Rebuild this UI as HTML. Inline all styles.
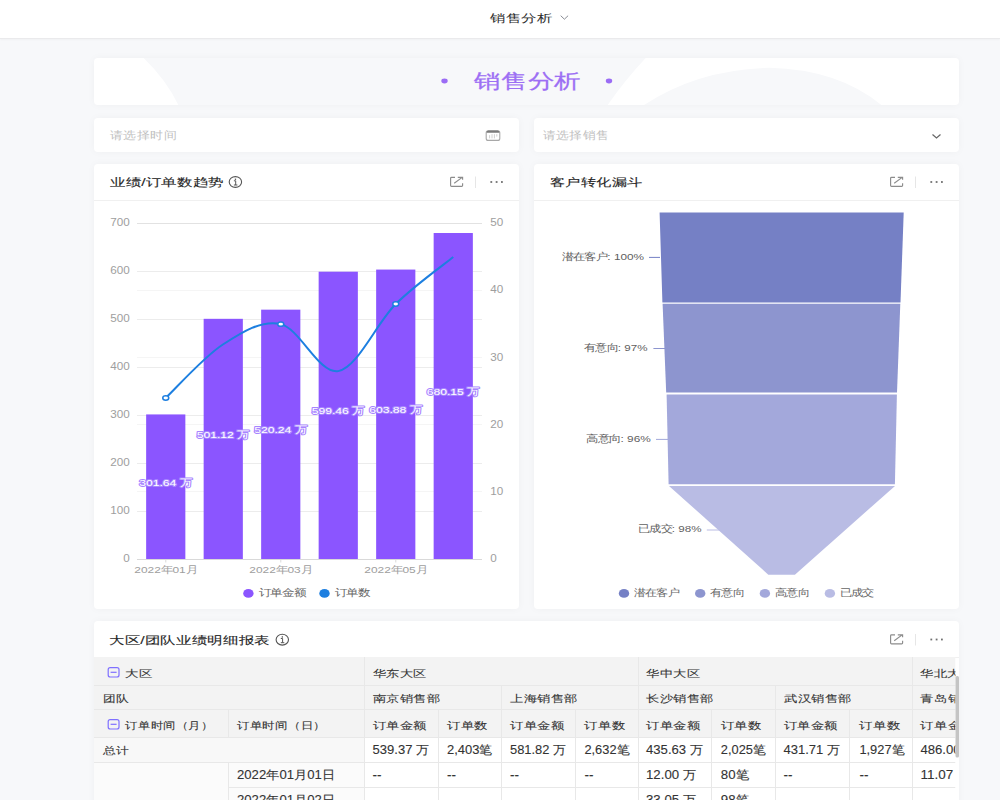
<!DOCTYPE html>
<html><head><meta charset="utf-8">
<style>
*{box-sizing:border-box;margin:0;padding:0}
html,body{width:1000px;height:800px;overflow:hidden}
body{background:#f7f8fa;font-family:"Liberation Sans",sans-serif;position:relative;color:#333}
.abs{position:absolute}
#hdr{left:0;top:0;width:1000px;height:39px;background:#fff;border-bottom:1px solid #eaeaec;box-shadow:0 1px 2px rgba(0,0,0,0.03)}
.card{position:absolute;background:#fff;border-radius:4px;box-shadow:0 0 9px rgba(0,0,0,0.035)}
.ch{position:absolute;left:0;top:0;right:0;height:37px;border-bottom:1px solid #f0f0f0}
svg text{font-family:"Liberation Sans",sans-serif}
</style></head><body>
<div id="hdr" class="abs"></div>
<div class="card" style="left:94px;top:57.5px;width:865px;height:47.6px;overflow:hidden">
<svg class="abs" style="left:0;top:0" width="865" height="48" viewBox="0 0 865 48">
<path d="M49.6 0 Q72.5 22 84.8 48 L513 48 Q531 22 551.7 0 Z" fill="#f7f8fa"/>
<path d="M548.6 48 Q603 11.5 675.5 9.8 Q745 11.5 788.6 48 Z" fill="#f7f8fa"/>
</svg></div>
<div class="card" style="left:94px;top:118px;width:425px;height:34px"></div>
<div class="card" style="left:534px;top:118px;width:425px;height:34px"></div>
<div class="card" style="left:94px;top:164px;width:425px;height:445px"><div class="ch"></div></div>
<div class="card" style="left:534px;top:164px;width:425px;height:445px"><div class="ch"></div></div>
<div class="card" style="left:94px;top:621px;width:865px;height:200px"><div class="ch"></div></div>

<svg class="abs" style="left:0;top:0" width="1000" height="800" viewBox="0 0 1000 800">
<text transform="translate(490.00,21.80) scale(1,0.87)" x="0" y="0" font-size="13" fill="#2b2b2b" font-weight="normal" text-anchor="start" textLength="62.5" lengthAdjust="spacingAndGlyphs" >销售分析</text>
<path d="M560.7 15.7 L564.4 19.2 L568.1 15.7" fill="none" stroke="#7a7f88" stroke-width="0.9"/>
<ellipse cx="444.5" cy="81" rx="3.2" ry="2.4" fill="#9b6cf5"/>
<ellipse cx="609" cy="81" rx="3.2" ry="2.4" fill="#9b6cf5"/>
<text transform="translate(474.00,87.60) scale(1,0.93)" x="0" y="0" font-size="22" fill="#9d6ff4" font-weight="normal" text-anchor="start" textLength="107.0" lengthAdjust="spacingAndGlyphs" stroke="#9d6ff4" stroke-width="0.25">销售分析</text>
<text transform="translate(109.50,138.60) scale(1,0.93)" x="0" y="0" font-size="12" fill="#bfbfbf" font-weight="normal" text-anchor="start" textLength="67.5" lengthAdjust="spacingAndGlyphs" >请选择时间</text>
<text transform="translate(542.50,138.60) scale(1,0.93)" x="0" y="0" font-size="12" fill="#bfbfbf" font-weight="normal" text-anchor="start" textLength="67.0" lengthAdjust="spacingAndGlyphs" >请选择销售</text>
<rect x="486.2" y="130.8" width="13.6" height="9.6" rx="2" fill="none" stroke="#a8a8a8" stroke-width="1.1"/>
<path d="M486.6 132.2 Q486.6 130.6 488.4 130.6 H497.6 Q499.4 130.6 499.4 132.2 V132.8 H486.6 Z" fill="#7a7a7a"/>
<path d="M489.6 135.2v3.2M492 134.2v4.2M494.4 134.2v4.2M496.8 134.2v2.4" stroke="#c4c4c4" stroke-width="0.8"/>
<path d="M932.5 134.5 L936.5 138 L940.5 134.5" fill="none" stroke="#666" stroke-width="1.2"/>
<text transform="translate(110.00,185.60) scale(1,0.87)" x="0" y="0" font-size="13" fill="#262626" font-weight="normal" text-anchor="start" textLength="114.0" lengthAdjust="spacingAndGlyphs" stroke="#262626" stroke-width="0.12">业绩/订单数趋势</text>
<ellipse cx="235.4" cy="182" rx="6.2" ry="5.4" fill="none" stroke="#555" stroke-width="1.1"/>
<rect x="234.8" y="178.6" width="1.3" height="1.3" fill="#555"/>
<path d="M233.9 180.8 H235.70000000000002 V185 M233.9 185 H237.4" fill="none" stroke="#555" stroke-width="1"/>
<path d="M455 177.3 H451.5 Q450.6 177.3 450.6 178.20000000000002 V185.4 Q450.6 186.3 451.5 186.3 H461.70000000000005 Q462.6 186.3 462.6 185.4 V183.2" fill="none" stroke="#8c8c8c" stroke-width="1.15"/>
<path d="M454.2 183.3 L462.20000000000005 177.4 M457.8 177.3 H462.6 V179.8" fill="none" stroke="#8c8c8c" stroke-width="1.15"/>
<path d="M475.5 176.5 V188" stroke="#e6e6e6" stroke-width="1"/>
<rect x="490.4" y="181.1" width="1.8" height="1.8" fill="#707070"/>
<rect x="495.7" y="181.1" width="1.8" height="1.8" fill="#707070"/>
<rect x="501.0" y="181.1" width="1.8" height="1.8" fill="#707070"/>
<text transform="translate(550.00,185.80) scale(1,0.87)" x="0" y="0" font-size="13" fill="#262626" font-weight="normal" text-anchor="start" textLength="92.5" lengthAdjust="spacingAndGlyphs" stroke="#262626" stroke-width="0.12">客户转化漏斗</text>
<path d="M895 177.3 H891.5 Q890.6 177.3 890.6 178.20000000000002 V185.4 Q890.6 186.3 891.5 186.3 H901.7 Q902.6 186.3 902.6 185.4 V183.2" fill="none" stroke="#8c8c8c" stroke-width="1.15"/>
<path d="M894.2 183.3 L902.2 177.4 M897.8 177.3 H902.6 V179.8" fill="none" stroke="#8c8c8c" stroke-width="1.15"/>
<path d="M915.5 176.5 V188" stroke="#e6e6e6" stroke-width="1"/>
<rect x="930.4" y="181.1" width="1.8" height="1.8" fill="#707070"/>
<rect x="935.7" y="181.1" width="1.8" height="1.8" fill="#707070"/>
<rect x="941.0" y="181.1" width="1.8" height="1.8" fill="#707070"/>
<text transform="translate(109.00,643.80) scale(1,0.87)" x="0" y="0" font-size="13" fill="#262626" font-weight="normal" text-anchor="start" textLength="161.0" lengthAdjust="spacingAndGlyphs" stroke="#262626" stroke-width="0.12">大区/团队业绩明细报表</text>
<ellipse cx="282.3" cy="639.7" rx="6.2" ry="5.4" fill="none" stroke="#555" stroke-width="1.1"/>
<rect x="281.7" y="636.3000000000001" width="1.3" height="1.3" fill="#555"/>
<path d="M280.8 638.5 H282.6 V642.7 M280.8 642.7 H284.3" fill="none" stroke="#555" stroke-width="1"/>
<path d="M895 634.8 H891.5 Q890.6 634.8 890.6 635.6999999999999 V642.9 Q890.6 643.8 891.5 643.8 H901.7 Q902.6 643.8 902.6 642.9 V640.7" fill="none" stroke="#8c8c8c" stroke-width="1.15"/>
<path d="M894.2 640.8 L902.2 634.9 M897.8 634.8 H902.6 V637.3" fill="none" stroke="#8c8c8c" stroke-width="1.15"/>
<path d="M915.5 634.0 V645.5" stroke="#e6e6e6" stroke-width="1"/>
<rect x="930.4" y="638.6" width="1.8" height="1.8" fill="#707070"/>
<rect x="935.7" y="638.6" width="1.8" height="1.8" fill="#707070"/>
<rect x="941.0" y="638.6" width="1.8" height="1.8" fill="#707070"/>
<path d="M137 511.5 H482" stroke="#000" stroke-opacity="0.075" stroke-width="1"/>
<path d="M137 463.5 H482" stroke="#000" stroke-opacity="0.075" stroke-width="1"/>
<path d="M137 415.5 H482" stroke="#000" stroke-opacity="0.075" stroke-width="1"/>
<path d="M137 367.5 H482" stroke="#000" stroke-opacity="0.075" stroke-width="1"/>
<path d="M137 319.5 H482" stroke="#000" stroke-opacity="0.075" stroke-width="1"/>
<path d="M137 271.5 H482" stroke="#000" stroke-opacity="0.075" stroke-width="1"/>
<path d="M137 223.5 H482" stroke="#000" stroke-opacity="0.075" stroke-width="1"/>
<path d="M137 491.5 H482" stroke="#000" stroke-opacity="0.04" stroke-width="1"/>
<path d="M137 424.5 H482" stroke="#000" stroke-opacity="0.04" stroke-width="1"/>
<path d="M137 357.5 H482" stroke="#000" stroke-opacity="0.04" stroke-width="1"/>
<path d="M137 290.5 H482" stroke="#000" stroke-opacity="0.04" stroke-width="1"/>
<path d="M137 223.5 H482" stroke="#000" stroke-opacity="0.04" stroke-width="1"/>
<text x="129.70" y="561.80" font-size="11" fill="#9e9e9e" font-weight="normal" text-anchor="end" textLength="6.5" lengthAdjust="spacingAndGlyphs" >0</text>
<text x="129.70" y="513.87" font-size="11" fill="#9e9e9e" font-weight="normal" text-anchor="end" textLength="19.5" lengthAdjust="spacingAndGlyphs" >100</text>
<text x="129.70" y="465.94" font-size="11" fill="#9e9e9e" font-weight="normal" text-anchor="end" textLength="19.5" lengthAdjust="spacingAndGlyphs" >200</text>
<text x="129.70" y="418.01" font-size="11" fill="#9e9e9e" font-weight="normal" text-anchor="end" textLength="19.5" lengthAdjust="spacingAndGlyphs" >300</text>
<text x="129.70" y="370.09" font-size="11" fill="#9e9e9e" font-weight="normal" text-anchor="end" textLength="19.5" lengthAdjust="spacingAndGlyphs" >400</text>
<text x="129.70" y="322.16" font-size="11" fill="#9e9e9e" font-weight="normal" text-anchor="end" textLength="19.5" lengthAdjust="spacingAndGlyphs" >500</text>
<text x="129.70" y="274.23" font-size="11" fill="#9e9e9e" font-weight="normal" text-anchor="end" textLength="19.5" lengthAdjust="spacingAndGlyphs" >600</text>
<text x="129.70" y="226.30" font-size="11" fill="#9e9e9e" font-weight="normal" text-anchor="end" textLength="19.5" lengthAdjust="spacingAndGlyphs" >700</text>
<text x="490.30" y="561.80" font-size="11" fill="#9e9e9e" font-weight="normal" text-anchor="start" textLength="6.5" lengthAdjust="spacingAndGlyphs" >0</text>
<text x="490.30" y="494.70" font-size="11" fill="#9e9e9e" font-weight="normal" text-anchor="start" textLength="13.0" lengthAdjust="spacingAndGlyphs" >10</text>
<text x="490.30" y="427.60" font-size="11" fill="#9e9e9e" font-weight="normal" text-anchor="start" textLength="13.0" lengthAdjust="spacingAndGlyphs" >20</text>
<text x="490.30" y="360.50" font-size="11" fill="#9e9e9e" font-weight="normal" text-anchor="start" textLength="13.0" lengthAdjust="spacingAndGlyphs" >30</text>
<text x="490.30" y="293.40" font-size="11" fill="#9e9e9e" font-weight="normal" text-anchor="start" textLength="13.0" lengthAdjust="spacingAndGlyphs" >40</text>
<text x="490.30" y="226.30" font-size="11" fill="#9e9e9e" font-weight="normal" text-anchor="start" textLength="13.0" lengthAdjust="spacingAndGlyphs" >50</text>
<rect x="146.15" y="414.43" width="39.2" height="144.57" fill="#8b55ff"/>
<rect x="203.65" y="318.82" width="39.2" height="240.18" fill="#8b55ff"/>
<rect x="261.15" y="309.66" width="39.2" height="249.34" fill="#8b55ff"/>
<rect x="318.65" y="271.69" width="39.2" height="287.31" fill="#8b55ff"/>
<rect x="376.15" y="269.57" width="39.2" height="289.43" fill="#8b55ff"/>
<rect x="433.65" y="233.01" width="39.2" height="325.99" fill="#8b55ff"/>
<path d="M137 559.5 H482" stroke="#d9d9d9" stroke-width="1"/>
<path d="M165.8 560 V562.5" stroke="#d9d9d9" stroke-width="1"/>
<path d="M280.8 560 V562.5" stroke="#d9d9d9" stroke-width="1"/>
<path d="M395.8 560 V562.5" stroke="#d9d9d9" stroke-width="1"/>
<text transform="translate(165.75,572.70) scale(1,0.87)" x="0" y="0" font-size="11" fill="#9e9e9e" font-weight="normal" text-anchor="middle" textLength="63.0" lengthAdjust="spacingAndGlyphs" >2022年01月</text>
<text transform="translate(280.75,572.70) scale(1,0.87)" x="0" y="0" font-size="11" fill="#9e9e9e" font-weight="normal" text-anchor="middle" textLength="63.0" lengthAdjust="spacingAndGlyphs" >2022年03月</text>
<text transform="translate(395.75,572.70) scale(1,0.87)" x="0" y="0" font-size="11" fill="#9e9e9e" font-weight="normal" text-anchor="middle" textLength="63.0" lengthAdjust="spacingAndGlyphs" >2022年05月</text>
<path d="M165.75 397.96 C175.33 389.01 204.08 356.58 223.25 344.28 C242.42 331.98 261.58 319.68 280.75 324.15 C299.92 328.62 319.08 374.48 338.25 371.12 C357.42 367.76 376.58 323.03 395.75 304.02 C414.92 285.01 443.67 264.88 453.25 257.05" fill="none" stroke="#1d7fe0" stroke-width="2"/>
<ellipse cx="165.75" cy="397.96" rx="3" ry="2.2" fill="#fff" stroke="#1d7fe0" stroke-width="1.5"/>
<ellipse cx="280.75" cy="324.15" rx="3" ry="2.2" fill="#fff" stroke="#1d7fe0" stroke-width="1.5"/>
<ellipse cx="395.75" cy="304.02" rx="3" ry="2.2" fill="#fff" stroke="#1d7fe0" stroke-width="1.5"/>
<text transform="translate(165.75,485.51) scale(1,0.85)" x="0" y="0" font-size="11.5" fill="#fff" font-weight="normal" text-anchor="middle" textLength="53.0" lengthAdjust="spacingAndGlyphs" stroke="#a785ff" stroke-width="2.2" paint-order="stroke" stroke-linejoin="round">301.64 万</text>
<text transform="translate(223.25,437.71) scale(1,0.85)" x="0" y="0" font-size="11.5" fill="#fff" font-weight="normal" text-anchor="middle" textLength="53.0" lengthAdjust="spacingAndGlyphs" stroke="#a785ff" stroke-width="2.2" paint-order="stroke" stroke-linejoin="round">501.12 万</text>
<text transform="translate(280.75,433.13) scale(1,0.85)" x="0" y="0" font-size="11.5" fill="#fff" font-weight="normal" text-anchor="middle" textLength="53.0" lengthAdjust="spacingAndGlyphs" stroke="#a785ff" stroke-width="2.2" paint-order="stroke" stroke-linejoin="round">520.24 万</text>
<text transform="translate(338.25,414.14) scale(1,0.85)" x="0" y="0" font-size="11.5" fill="#fff" font-weight="normal" text-anchor="middle" textLength="53.0" lengthAdjust="spacingAndGlyphs" stroke="#a785ff" stroke-width="2.2" paint-order="stroke" stroke-linejoin="round">599.46 万</text>
<text transform="translate(395.75,413.08) scale(1,0.85)" x="0" y="0" font-size="11.5" fill="#fff" font-weight="normal" text-anchor="middle" textLength="53.0" lengthAdjust="spacingAndGlyphs" stroke="#a785ff" stroke-width="2.2" paint-order="stroke" stroke-linejoin="round">603.88 万</text>
<text transform="translate(453.25,394.81) scale(1,0.85)" x="0" y="0" font-size="11.5" fill="#fff" font-weight="normal" text-anchor="middle" textLength="53.0" lengthAdjust="spacingAndGlyphs" stroke="#a785ff" stroke-width="2.2" paint-order="stroke" stroke-linejoin="round">680.15 万</text>
<ellipse cx="248.4" cy="593.4" rx="5.2" ry="4.4" fill="#8b55ff"/>
<text transform="translate(258.50,595.60) scale(1,0.87)" x="0" y="0" font-size="11" fill="#666" font-weight="normal" text-anchor="start" textLength="47.0" lengthAdjust="spacingAndGlyphs" >订单金额</text>
<ellipse cx="324.5" cy="593.4" rx="5.2" ry="4.4" fill="#1d7fe0"/>
<text transform="translate(334.80,595.60) scale(1,0.87)" x="0" y="0" font-size="11" fill="#666" font-weight="normal" text-anchor="start" textLength="35.0" lengthAdjust="spacingAndGlyphs" >订单数</text>
<path d="M659.6 212.6 L903.7 212.6 L900.5 302.4 L662.4 302.4 Z" fill="#7580c5"/>
<path d="M662.6 303.8 L900.3 303.8 L897 392.6 L666.2 392.6 Z" fill="#8d95cf"/>
<path d="M666.6 394.6 L896.9 394.6 L894.9 484.2 L668.6 484.2 Z" fill="#a3a8db"/>
<path d="M669 485.9 L895 485.9 L794.9 574.7 L768.3 574.7 Z" fill="#b9bce4"/>
<path d="M649 257.4 H660" stroke="#7580c5" stroke-width="1"/>
<text transform="translate(561.60,260.00) scale(1,0.87)" x="0" y="0" font-size="11" fill="#606060" font-weight="normal" text-anchor="start" textLength="82.4" lengthAdjust="spacingAndGlyphs" >潜在客户: 100%</text>
<path d="M653.4 348.5 H665" stroke="#8d95cf" stroke-width="1"/>
<text transform="translate(584.10,350.80) scale(1,0.87)" x="0" y="0" font-size="11" fill="#606060" font-weight="normal" text-anchor="start" textLength="63.4" lengthAdjust="spacingAndGlyphs" >有意向: 97%</text>
<path d="M656 439.4 H668" stroke="#a3a8db" stroke-width="1"/>
<text transform="translate(586.00,441.60) scale(1,0.87)" x="0" y="0" font-size="11" fill="#606060" font-weight="normal" text-anchor="start" textLength="64.8" lengthAdjust="spacingAndGlyphs" >高意向: 96%</text>
<path d="M706.8 530 H720" stroke="#b9bce4" stroke-width="1"/>
<text transform="translate(638.00,532.40) scale(1,0.87)" x="0" y="0" font-size="11" fill="#606060" font-weight="normal" text-anchor="start" textLength="63.5" lengthAdjust="spacingAndGlyphs" >已成交: 98%</text>
<ellipse cx="624" cy="593.4" rx="5.2" ry="4.4" fill="#7580c5"/>
<text transform="translate(633.80,595.60) scale(1,0.87)" x="0" y="0" font-size="11" fill="#666" font-weight="normal" text-anchor="start" textLength="45.0" lengthAdjust="spacingAndGlyphs" >潜在客户</text>
<ellipse cx="700.2" cy="593.4" rx="5.2" ry="4.4" fill="#8d95cf"/>
<text transform="translate(710.00,595.60) scale(1,0.87)" x="0" y="0" font-size="11" fill="#666" font-weight="normal" text-anchor="start" textLength="34.0" lengthAdjust="spacingAndGlyphs" >有意向</text>
<ellipse cx="764.9" cy="593.4" rx="5.2" ry="4.4" fill="#a3a8db"/>
<text transform="translate(775.00,595.60) scale(1,0.87)" x="0" y="0" font-size="11" fill="#666" font-weight="normal" text-anchor="start" textLength="34.0" lengthAdjust="spacingAndGlyphs" >高意向</text>
<ellipse cx="829.9" cy="593.4" rx="5.2" ry="4.4" fill="#b9bce4"/>
<text transform="translate(839.70,595.60) scale(1,0.87)" x="0" y="0" font-size="11" fill="#666" font-weight="normal" text-anchor="start" textLength="34.0" lengthAdjust="spacingAndGlyphs" >已成交</text>
<svg x="0" y="0" width="955.5" height="800" overflow="hidden">
<rect x="94" y="657" width="861.50" height="80.50" fill="#f3f3f3"/>
<rect x="94" y="737.5" width="270.50" height="25.00" fill="#f8f8f8"/>
<rect x="94" y="762.5" width="270.50" height="37.50" fill="#fbfbfb"/>
<path d="M94 685.5 H955.5" stroke="#e8e8e8" stroke-width="1"/>
<path d="M94 709.5 H955.5" stroke="#e8e8e8" stroke-width="1"/>
<path d="M94 737.5 H955.5" stroke="#e8e8e8" stroke-width="1"/>
<path d="M94 762.5 H955.5" stroke="#e8e8e8" stroke-width="1"/>
<path d="M228.5 787.5 H955.5" stroke="#e8e8e8" stroke-width="1"/>
<path d="M228.5 709.5 V737.5" stroke="#e8e8e8" stroke-width="1"/>
<path d="M228.5 762.5 V800" stroke="#e8e8e8" stroke-width="1"/>
<path d="M364.5 657 V800" stroke="#e8e8e8" stroke-width="1"/>
<path d="M438.5 709.5 V800" stroke="#e8e8e8" stroke-width="1"/>
<path d="M501.5 685.5 V800" stroke="#e8e8e8" stroke-width="1"/>
<path d="M575.5 709.5 V800" stroke="#e8e8e8" stroke-width="1"/>
<path d="M638.5 657 V800" stroke="#e8e8e8" stroke-width="1"/>
<path d="M711.5 709.5 V800" stroke="#e8e8e8" stroke-width="1"/>
<path d="M775.5 685.5 V800" stroke="#e8e8e8" stroke-width="1"/>
<path d="M849.5 709.5 V800" stroke="#e8e8e8" stroke-width="1"/>
<path d="M912.5 657 V800" stroke="#e8e8e8" stroke-width="1"/>
<path d="M986.5 709.5 V800" stroke="#e8e8e8" stroke-width="1"/>
</svg>
<rect x="108.19999999999999" y="667.6" width="10.8" height="9.4" rx="2" fill="none" stroke="#7f70ff" stroke-width="1.2"/>
<path d="M110.6 672.3 H116.6" stroke="#7f70ff" stroke-width="1.2"/>
<rect x="108.19999999999999" y="719.6" width="10.8" height="9.4" rx="2" fill="none" stroke="#7f70ff" stroke-width="1.2"/>
<path d="M110.6 724.3 H116.6" stroke="#7f70ff" stroke-width="1.2"/>
<svg x="0" y="0" width="955.5" height="800" overflow="hidden">
<text transform="translate(124.80,676.80) scale(1,0.87)" x="0" y="0" font-size="12" fill="#333" font-weight="normal" text-anchor="start" textLength="27.5" lengthAdjust="spacingAndGlyphs" stroke="#333" stroke-width="0.1">大区</text>
<text transform="translate(102.60,702.00) scale(1,0.87)" x="0" y="0" font-size="12" fill="#333" font-weight="normal" text-anchor="start" textLength="26.0" lengthAdjust="spacingAndGlyphs" stroke="#333" stroke-width="0.1">团队</text>
<text transform="translate(125.40,728.50) scale(1,0.87)" x="0" y="0" font-size="12" fill="#333" font-weight="normal" text-anchor="start" textLength="88.0" lengthAdjust="spacingAndGlyphs" stroke="#333" stroke-width="0.1">订单时间（月）</text>
<text transform="translate(237.00,728.50) scale(1,0.87)" x="0" y="0" font-size="12" fill="#333" font-weight="normal" text-anchor="start" textLength="89.0" lengthAdjust="spacingAndGlyphs" stroke="#333" stroke-width="0.1">订单时间（日）</text>
<text transform="translate(102.60,754.00) scale(1,0.87)" x="0" y="0" font-size="12" fill="#333" font-weight="normal" text-anchor="start" textLength="26.0" lengthAdjust="spacingAndGlyphs" stroke="#333" stroke-width="0.1">总计</text>
<text transform="translate(237.00,778.90) scale(1,0.999)" x="0" y="0" font-size="12" fill="#333" font-weight="normal" text-anchor="start" textLength="98.0" lengthAdjust="spacingAndGlyphs" stroke="#333" stroke-width="0.1">2022年01月01日</text>
<text transform="translate(237.00,804.10) scale(1,0.999)" x="0" y="0" font-size="12" fill="#333" font-weight="normal" text-anchor="start" textLength="98.0" lengthAdjust="spacingAndGlyphs" stroke="#333" stroke-width="0.1">2022年01月02日</text>
<text transform="translate(372.60,676.80) scale(1,0.87)" x="0" y="0" font-size="12" fill="#333" font-weight="normal" text-anchor="start" textLength="54.0" lengthAdjust="spacingAndGlyphs" stroke="#333" stroke-width="0.1">华东大区</text>
<text transform="translate(646.00,676.80) scale(1,0.87)" x="0" y="0" font-size="12" fill="#333" font-weight="normal" text-anchor="start" textLength="54.0" lengthAdjust="spacingAndGlyphs" stroke="#333" stroke-width="0.1">华中大区</text>
<text transform="translate(920.40,676.80) scale(1,0.87)" x="0" y="0" font-size="12" fill="#333" font-weight="normal" text-anchor="start" textLength="54.0" lengthAdjust="spacingAndGlyphs" stroke="#333" stroke-width="0.1">华北大区</text>
<text transform="translate(372.60,702.00) scale(1,0.87)" x="0" y="0" font-size="12" fill="#333" font-weight="normal" text-anchor="start" textLength="68.0" lengthAdjust="spacingAndGlyphs" stroke="#333" stroke-width="0.1">南京销售部</text>
<text transform="translate(510.00,702.00) scale(1,0.87)" x="0" y="0" font-size="12" fill="#333" font-weight="normal" text-anchor="start" textLength="68.0" lengthAdjust="spacingAndGlyphs" stroke="#333" stroke-width="0.1">上海销售部</text>
<text transform="translate(646.00,702.00) scale(1,0.87)" x="0" y="0" font-size="12" fill="#333" font-weight="normal" text-anchor="start" textLength="68.0" lengthAdjust="spacingAndGlyphs" stroke="#333" stroke-width="0.1">长沙销售部</text>
<text transform="translate(784.00,702.00) scale(1,0.87)" x="0" y="0" font-size="12" fill="#333" font-weight="normal" text-anchor="start" textLength="68.0" lengthAdjust="spacingAndGlyphs" stroke="#333" stroke-width="0.1">武汉销售部</text>
<text transform="translate(920.40,702.00) scale(1,0.87)" x="0" y="0" font-size="12" fill="#333" font-weight="normal" text-anchor="start" textLength="68.0" lengthAdjust="spacingAndGlyphs" stroke="#333" stroke-width="0.1">青岛销售部</text>
<text transform="translate(372.60,728.50) scale(1,0.87)" x="0" y="0" font-size="12" fill="#333" font-weight="normal" text-anchor="start" textLength="54.5" lengthAdjust="spacingAndGlyphs" stroke="#333" stroke-width="0.1">订单金额</text>
<text transform="translate(447.00,728.50) scale(1,0.87)" x="0" y="0" font-size="12" fill="#333" font-weight="normal" text-anchor="start" textLength="41.0" lengthAdjust="spacingAndGlyphs" stroke="#333" stroke-width="0.1">订单数</text>
<text transform="translate(510.00,728.50) scale(1,0.87)" x="0" y="0" font-size="12" fill="#333" font-weight="normal" text-anchor="start" textLength="54.5" lengthAdjust="spacingAndGlyphs" stroke="#333" stroke-width="0.1">订单金额</text>
<text transform="translate(584.40,728.50) scale(1,0.87)" x="0" y="0" font-size="12" fill="#333" font-weight="normal" text-anchor="start" textLength="41.0" lengthAdjust="spacingAndGlyphs" stroke="#333" stroke-width="0.1">订单数</text>
<text transform="translate(646.00,728.50) scale(1,0.87)" x="0" y="0" font-size="12" fill="#333" font-weight="normal" text-anchor="start" textLength="54.5" lengthAdjust="spacingAndGlyphs" stroke="#333" stroke-width="0.1">订单金额</text>
<text transform="translate(720.80,728.50) scale(1,0.87)" x="0" y="0" font-size="12" fill="#333" font-weight="normal" text-anchor="start" textLength="41.0" lengthAdjust="spacingAndGlyphs" stroke="#333" stroke-width="0.1">订单数</text>
<text transform="translate(783.50,728.50) scale(1,0.87)" x="0" y="0" font-size="12" fill="#333" font-weight="normal" text-anchor="start" textLength="54.5" lengthAdjust="spacingAndGlyphs" stroke="#333" stroke-width="0.1">订单金额</text>
<text transform="translate(859.40,728.50) scale(1,0.87)" x="0" y="0" font-size="12" fill="#333" font-weight="normal" text-anchor="start" textLength="41.0" lengthAdjust="spacingAndGlyphs" stroke="#333" stroke-width="0.1">订单数</text>
<text transform="translate(920.40,728.50) scale(1,0.87)" x="0" y="0" font-size="12" fill="#333" font-weight="normal" text-anchor="start" textLength="54.5" lengthAdjust="spacingAndGlyphs" stroke="#333" stroke-width="0.1">订单金额</text>
<text transform="translate(372.60,754.10) scale(1,0.999)" x="0" y="0" font-size="12" fill="#333" font-weight="normal" text-anchor="start" textLength="56.5" lengthAdjust="spacingAndGlyphs" stroke="#333" stroke-width="0.1">539.37 万</text>
<text transform="translate(447.00,754.10) scale(1,0.999)" x="0" y="0" font-size="12" fill="#333" font-weight="normal" text-anchor="start" textLength="45.5" lengthAdjust="spacingAndGlyphs" stroke="#333" stroke-width="0.1">2,403笔</text>
<text transform="translate(510.00,754.10) scale(1,0.999)" x="0" y="0" font-size="12" fill="#333" font-weight="normal" text-anchor="start" textLength="56.0" lengthAdjust="spacingAndGlyphs" stroke="#333" stroke-width="0.1">581.82 万</text>
<text transform="translate(584.40,754.10) scale(1,0.999)" x="0" y="0" font-size="12" fill="#333" font-weight="normal" text-anchor="start" textLength="45.0" lengthAdjust="spacingAndGlyphs" stroke="#333" stroke-width="0.1">2,632笔</text>
<text transform="translate(646.00,754.10) scale(1,0.999)" x="0" y="0" font-size="12" fill="#333" font-weight="normal" text-anchor="start" textLength="57.0" lengthAdjust="spacingAndGlyphs" stroke="#333" stroke-width="0.1">435.63 万</text>
<text transform="translate(720.80,754.10) scale(1,0.999)" x="0" y="0" font-size="12" fill="#333" font-weight="normal" text-anchor="start" textLength="45.0" lengthAdjust="spacingAndGlyphs" stroke="#333" stroke-width="0.1">2,025笔</text>
<text transform="translate(783.50,754.10) scale(1,0.999)" x="0" y="0" font-size="12" fill="#333" font-weight="normal" text-anchor="start" textLength="56.5" lengthAdjust="spacingAndGlyphs" stroke="#333" stroke-width="0.1">431.71 万</text>
<text transform="translate(859.40,754.10) scale(1,0.999)" x="0" y="0" font-size="12" fill="#333" font-weight="normal" text-anchor="start" textLength="45.0" lengthAdjust="spacingAndGlyphs" stroke="#333" stroke-width="0.1">1,927笔</text>
<text transform="translate(920.40,754.10) scale(1,0.999)" x="0" y="0" font-size="12" fill="#333" font-weight="normal" text-anchor="start" textLength="57.0" lengthAdjust="spacingAndGlyphs" stroke="#333" stroke-width="0.1">486.00 万</text>
<text transform="translate(372.60,778.90) scale(1,0.999)" x="0" y="0" font-size="12" fill="#333" font-weight="normal" text-anchor="start" textLength="9.0" lengthAdjust="spacingAndGlyphs" stroke="#333" stroke-width="0.1">--</text>
<text transform="translate(447.00,778.90) scale(1,0.999)" x="0" y="0" font-size="12" fill="#333" font-weight="normal" text-anchor="start" textLength="9.0" lengthAdjust="spacingAndGlyphs" stroke="#333" stroke-width="0.1">--</text>
<text transform="translate(510.00,778.90) scale(1,0.999)" x="0" y="0" font-size="12" fill="#333" font-weight="normal" text-anchor="start" textLength="9.0" lengthAdjust="spacingAndGlyphs" stroke="#333" stroke-width="0.1">--</text>
<text transform="translate(584.40,778.90) scale(1,0.999)" x="0" y="0" font-size="12" fill="#333" font-weight="normal" text-anchor="start" textLength="9.0" lengthAdjust="spacingAndGlyphs" stroke="#333" stroke-width="0.1">--</text>
<text transform="translate(646.00,778.90) scale(1,0.999)" x="0" y="0" font-size="12" fill="#333" font-weight="normal" text-anchor="start" textLength="50.0" lengthAdjust="spacingAndGlyphs" stroke="#333" stroke-width="0.1">12.00 万</text>
<text transform="translate(720.80,778.90) scale(1,0.999)" x="0" y="0" font-size="12" fill="#333" font-weight="normal" text-anchor="start" textLength="28.0" lengthAdjust="spacingAndGlyphs" stroke="#333" stroke-width="0.1">80笔</text>
<text transform="translate(783.50,778.90) scale(1,0.999)" x="0" y="0" font-size="12" fill="#333" font-weight="normal" text-anchor="start" textLength="9.0" lengthAdjust="spacingAndGlyphs" stroke="#333" stroke-width="0.1">--</text>
<text transform="translate(859.40,778.90) scale(1,0.999)" x="0" y="0" font-size="12" fill="#333" font-weight="normal" text-anchor="start" textLength="9.0" lengthAdjust="spacingAndGlyphs" stroke="#333" stroke-width="0.1">--</text>
<text transform="translate(920.40,778.90) scale(1,0.999)" x="0" y="0" font-size="12" fill="#333" font-weight="normal" text-anchor="start" textLength="50.0" lengthAdjust="spacingAndGlyphs" stroke="#333" stroke-width="0.1">11.07 万</text>
<text transform="translate(646.00,804.10) scale(1,0.999)" x="0" y="0" font-size="12" fill="#333" font-weight="normal" text-anchor="start" textLength="50.0" lengthAdjust="spacingAndGlyphs" stroke="#333" stroke-width="0.1">33.05 万</text>
<text transform="translate(720.80,804.10) scale(1,0.999)" x="0" y="0" font-size="12" fill="#333" font-weight="normal" text-anchor="start" textLength="28.0" lengthAdjust="spacingAndGlyphs" stroke="#333" stroke-width="0.1">98笔</text>
</svg>
<rect x="955.5" y="676" width="3.5" height="81.5" rx="1.5" fill="#c4c4c4"/>
</svg>
</body></html>
